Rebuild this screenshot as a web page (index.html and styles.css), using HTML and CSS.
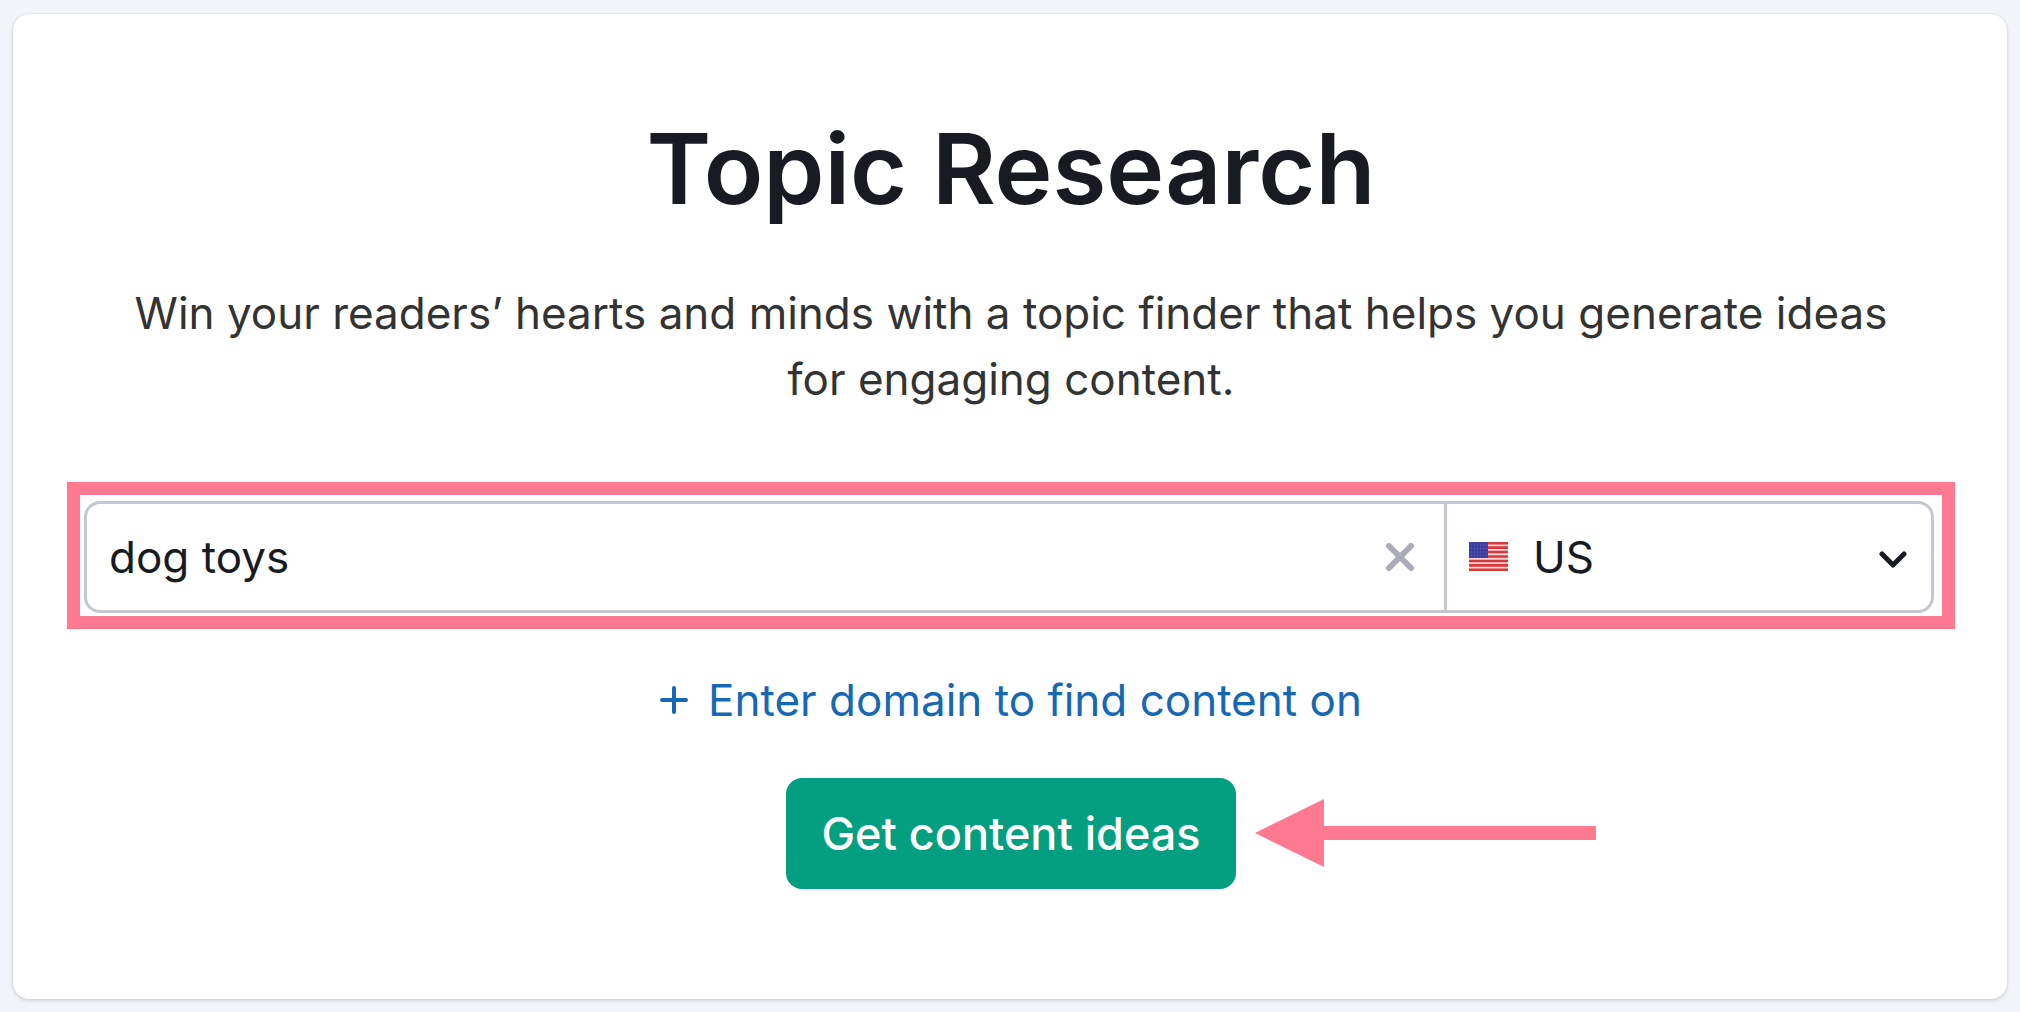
FILE: index.html
```html
<!DOCTYPE html>
<html lang="en">
<head>
    <title>Topic Research</title>
    <meta charset="utf-8">
    <meta name="viewport" content="width=device-width, initial-scale=1">
    <link rel="stylesheet" href="styles.css">
</head>
<body>
<main class="card">
    <h1>Topic Research</h1>
    <p class="subtitle">Win your readers’ hearts and minds with a topic finder that helps you generate ideas for engaging content.</p>
    <form class="search-form">
        <div class="highlight">
            <div class="search-bar">
                <div class="topic-field">
                    <input type="text" id="topic" aria-label="Topic" value="dog toys">
                    <button type="button" class="clear" aria-label="Clear">
                        <svg width="28" height="28" viewBox="0 0 28 28">
                            <path d="M3 3L25 25M25 3L3 25" fill="none" stroke="#a9abb6" stroke-width="6" stroke-linecap="round"/>
                        </svg>
                    </button>
                </div>
                <div class="country-field">
                    <svg class="flag" width="39" height="29" viewBox="0 0 39 29">
                        <rect width="39" height="29" fill="#f9d5d5"/>
                        <path d="M0 1.1H39M0 5.6H39M0 10H39M0 14.5H39M0 19H39M0 23.4H39M0 27.9H39" stroke="#d8383c" stroke-width="2.6"/>
                        <rect width="19" height="16" fill="#3d3f9f"/>
                        <path d="M2 3H18M2 6.5H18M2 10H18M2 13.5H18" stroke="#6468c4" stroke-width="1" stroke-dasharray="1 2"/>
                    </svg>
                    <select id="country" aria-label="Country">
                        <option>US</option>
                        <option>UK</option>
                        <option>CA</option>
                    </select>
                    <svg class="chevron" width="28" height="18" viewBox="0 0 28 18">
                        <path d="M3 3L14 14L25 3" fill="none" stroke="#191b23" stroke-width="5" stroke-linecap="round" stroke-linejoin="round"/>
                    </svg>
                </div>
            </div>
        </div>
        <a href="#" class="add-domain">
            <svg width="28" height="28" viewBox="0 0 28 28">
                <path d="M14 2V26M2 14H26" fill="none" stroke="#1768b3" stroke-width="4" stroke-linecap="round"/>
            </svg>
            Enter domain to find content on
        </a>
        <div class="submit-wrap">
            <button type="submit" class="submit">Get content ideas</button>
            <svg class="arrow" width="341" height="68" viewBox="0 0 341 68">
                <path d="M0 34L69 0V27H341V41H69V68Z" fill="#ff7990"/>
            </svg>
        </div>
    </form>
</main>
</body>
</html>
```

FILE: styles.css
```css
* {
    box-sizing: border-box;
}

body {
    font-family: Inter, "Liberation Sans", sans-serif;
    font-size: 44px;
    line-height: 66px;
    color: #191b23;
    background-color: #f3f4f9;
    margin: 0;
    padding: 14px 13px 12px;
}

.card {
    background-color: #fff;
    border-radius: 16px;
    padding: 95px 52px 110px 54px;
    box-shadow: 0 0 2px rgba(25, 27, 35, 0.16), 0 2px 4px rgba(25, 27, 35, 0.12);
}

h1 {
    font-size: 98px;
    font-weight: 600;
    line-height: 120px;
    text-align: center;
    margin: 0 0 51px;
}

.subtitle {
    max-width: 1800px;
    margin: 0 auto 70px;
    text-align: center;
    color: #333;
}

.search-form {
    display: flex;
    flex-direction: column;
    align-items: center;
}

.highlight {
    width: 100%;
    padding: 6px 8px 3px 4px;
    border: 13px solid #ff7990;
}

.search-bar {
    display: flex;
    height: 112px;
    border: 3px solid #c4c7cf;
    border-radius: 16px;
}

.topic-field {
    flex: 1;
    display: flex;
    align-items: center;
    padding: 0 30px 0 22px;
}

.country-field {
    position: relative;
    width: 487px;
    border-left: 3px solid #c4c7cf;
}

input,
select {
    font: inherit;
    color: inherit;
    background: none;
    border: none;
    outline: none;
}

input {
    flex: 1;
    min-width: 0;
    padding: 0;
}

select {
    appearance: none;
    width: 100%;
    height: 100%;
    padding: 0 80px 0 86px;
    cursor: pointer;
}

.flag,
.chevron {
    position: absolute;
    top: 38px;
    left: 22px;
    pointer-events: none;
}

.chevron {
    top: 47px;
    left: auto;
    right: 24px;
}

.clear {
    display: flex;
    padding: 0;
    background: none;
    border: none;
    cursor: pointer;
}

.add-domain {
    display: flex;
    align-items: center;
    gap: 20px;
    margin: 38px 0 45px;
    color: #1768b3;
    text-decoration: none;
}

.submit-wrap {
    position: relative;
}

.submit {
    display: block;
    height: 111px;
    padding: 0 35px;
    font: inherit;
    font-size: 45px;
    font-weight: 500;
    color: #fff;
    background-color: #049f80;
    border: none;
    border-radius: 16px;
    cursor: pointer;
}

.submit:hover {
    background-color: #038a6f;
}

.arrow {
    position: absolute;
    top: 21px;
    left: calc(100% + 19px);
}
```
